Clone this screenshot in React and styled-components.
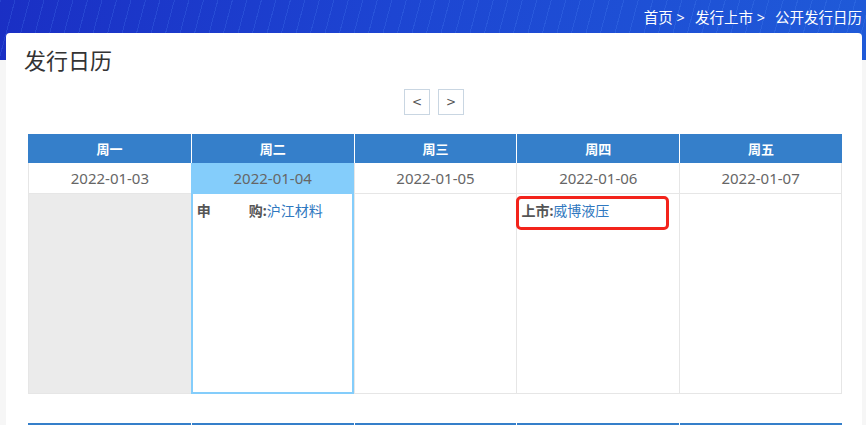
import styled, { createGlobalStyle } from 'styled-components';

const GlobalStyle = createGlobalStyle`
  html, body {
    margin: 0;
    padding: 0;
    background: #f6f6f6;
    font-family: "Noto Sans", "Noto Sans CJK SC", sans-serif;
  }
`;

const Page = styled.div`
  min-height: 425px;
  background:
    repeating-linear-gradient(105deg, rgba(90, 150, 255, 0.18) 0 1px, transparent 1px 14px) 0 0 / 100% 60px no-repeat,
    linear-gradient(100deg, #1a2fc4 0%, #1d45d2 45%, #1f5ad8 100%) 0 0 / 100% 60px no-repeat,
    #f6f6f6;
  padding: 0 4px 0 6px;
`;

const Banner = styled.div`
  height: 33px;
  display: flex;
  align-items: center;
  justify-content: flex-end;
  color: #fff;
  font-size: 14.5px;
  gap: 10px;
  span { white-space: nowrap; }
`;

const Card = styled.div`
  background: #fff;
  border-radius: 4px;
  padding: 11px 20px 0 22px;
  min-height: 400px;
`;

const Title = styled.h1`
  margin: 0 0 0 -4px;
  font-size: 22px;
  font-weight: 400;
  color: #333;
  line-height: 32px;
`;

const Nav = styled.div`
  display: flex;
  justify-content: center;
  gap: 8px;
  margin: 13px 0 19px;
  padding-right: 2px;
`;

const NavButton = styled.button`
  width: 26px;
  height: 26px;
  border: 1px solid #c9d6e2;
  background: #fff;
  color: #555;
  font-size: 12px;
  font-family: "DejaVu Sans", sans-serif;
  padding: 0;
  cursor: pointer;
`;

const Week = styled.div`
  display: grid;
  grid-template-columns: repeat(5, 1fr);
  margin-bottom: 29px;
`;

const HeadCell = styled.div`
  background: #357fca;
  color: #fff;
  font-weight: 700;
  font-size: 13px;
  height: 29px;
  display: flex;
  align-items: center;
  justify-content: center;
  border-left: 1px solid #fff;
  &:first-child { border-left: none; }
`;

const DateCell = styled.div`
  height: 30px;
  display: flex;
  align-items: center;
  justify-content: center;
  font-size: 15px;
  color: #666;
  background: ${p => (p.$active ? '#84cdfb' : '#fff')};
  border-left: 1px solid ${p => (p.$active ? '#84cdfb' : '#e6e6e6')};
  border-bottom: 1px solid ${p => (p.$active ? '#84cdfb' : '#e6e6e6')};
  &:first-of-type { border-left: 1px solid #e6e6e6; }
  &:nth-child(10) { border-right: 1px solid #e6e6e6; }
`;

const BodyCell = styled.div`
  position: relative;
  height: 200px;
  box-sizing: border-box;
  padding: 7px 4px;
  background: ${p => (p.$muted ? '#ebebeb' : '#fff')};
  border: ${p => (p.$active ? '2px solid #84cdfb' : 'none')};
  border-top: none;
  border-left: ${p => (p.$active ? '2px solid #84cdfb' : '1px solid #e6e6e6')};
  border-bottom: ${p => (p.$active ? '2px solid #84cdfb' : '1px solid #e6e6e6')};
  &:last-child { border-right: 1px solid #e6e6e6; }
  font-size: 14px;
  line-height: 20px;
`;

const Entry = styled.div`
  display: flex;
  white-space: nowrap;
`;

const Label = styled.span`
  font-weight: 700;
  color: #555;
  display: inline-flex;
  justify-content: space-between;
  width: ${p => (p.$wide ? '66px' : 'auto')};
`;

const Colon = styled.span`
  font-weight: 700;
  color: #555;
`;

const StockLink = styled.a`
  color: #2f78c0;
  text-decoration: none;
`;

const Highlight = styled.div`
  position: absolute;
  left: -1px;
  top: 2px;
  width: 153px;
  height: 34px;
  box-sizing: border-box;
  border: 3px solid #f3231b;
  border-radius: 5px;
`;

const days = [
  { name: '周一', date: '2022-01-03', muted: true },
  { name: '周二', date: '2022-01-04', active: true, items: [{ wide: true, chars: ['申', '购'], stock: '沪江材料' }] },
  { name: '周三', date: '2022-01-05' },
  { name: '周四', date: '2022-01-06', mark: true, items: [{ chars: ['上市'], stock: '威博液压' }] },
  { name: '周五', date: '2022-01-07' },
];

export default function App() {
  return (
    <Page>
      <GlobalStyle />
      <Banner>
        <span>首页 &gt;</span>
        <span>发行上市 &gt;</span>
        <span>公开发行日历</span>
      </Banner>
      <Card>
        <Title>发行日历</Title>
        <Nav>
          <NavButton>&lt;</NavButton>
          <NavButton>&gt;</NavButton>
        </Nav>
        <Week>
          {days.map(d => <HeadCell key={d.name}>{d.name}</HeadCell>)}
          {days.map(d => <DateCell key={d.date} $active={d.active}>{d.date}</DateCell>)}
          {days.map(d => (
            <BodyCell key={d.date + 'b'} $muted={d.muted} $active={d.active}>
              {(d.items || []).map(it => (
                <Entry key={it.stock}>
                  <Label $wide={it.wide}>{it.chars.map(c => <span key={c}>{c}</span>)}</Label>
                  <Colon>:</Colon>
                  <StockLink href="#">{it.stock}</StockLink>
                </Entry>
              ))}
              {d.mark && <Highlight />}
            </BodyCell>
          ))}
        </Week>
        <Week>
          {days.map(d => <HeadCell key={d.name + 'n'} />)}
        </Week>
      </Card>
    </Page>
  );
}
